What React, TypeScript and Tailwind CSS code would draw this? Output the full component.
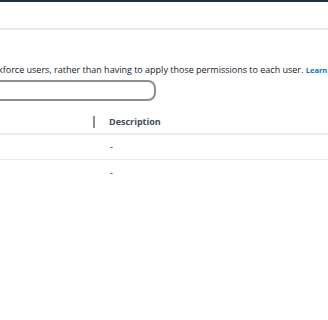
export default function App() {
  return (
    <div className="w-[328px] h-[320px] overflow-hidden bg-white font-['Open_Sans',sans-serif] text-[#16191f]">
      <div className="h-[2px] bg-[#232f3e]" />
      <div className="h-[26px]" />
      <div className="h-[2px] bg-[#e9ebed]" />
      <div className="pt-[34px] whitespace-nowrap text-[9px] leading-[12px] ml-[-2px]">
        kforce users, rather than having to apply those permissions to each user.{' '}
        <a className="text-[7.5px] font-bold text-[#0972d3]">Learn more</a>
      </div>
      <div className="mt-[4px] ml-[-20px] w-[176px] h-[21px] rounded-lg border-2 border-[#8c8c94]" />
      <div className="mt-[10px] flex items-center h-[24px] border-b-2 border-[#e9ebed]">
        <div className="w-[95px] flex justify-end">
          <div className="w-[2px] h-[12px] bg-[#8c8c94]" />
        </div>
        <div className="pl-[14px] text-[9px] font-bold text-[#414d5c]">Description</div>
      </div>
      <div className="flex items-center h-[25px] border-b border-[#e9ebed]">
        <div className="pl-[110px] text-[9px]">-</div>
      </div>
      <div className="flex items-center h-[25px]">
        <div className="pl-[110px] text-[9px]">-</div>
      </div>
    </div>
  )
}
